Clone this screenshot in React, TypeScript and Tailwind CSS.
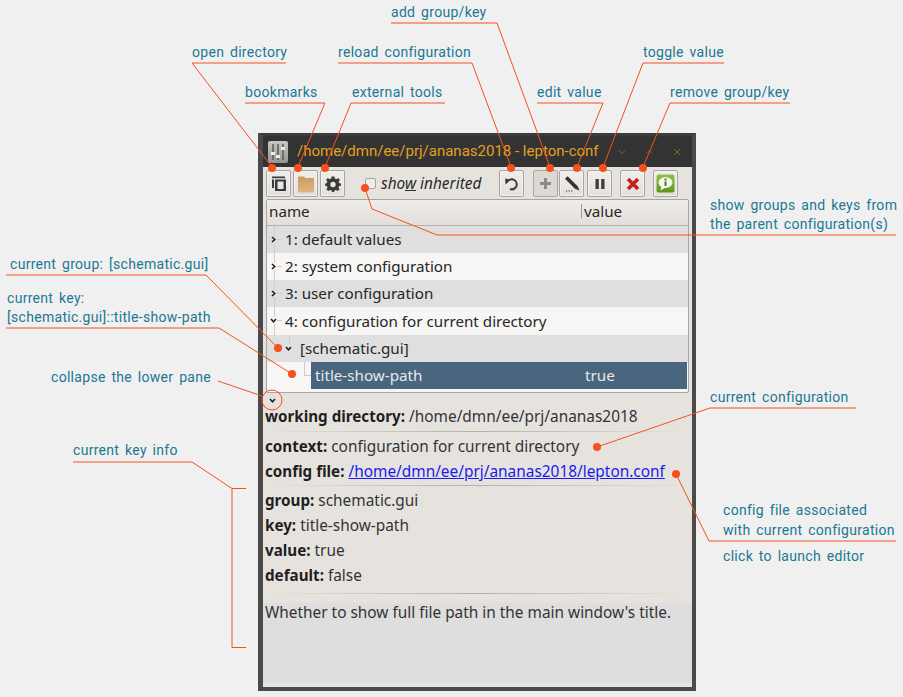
const noteClass = "absolute whitespace-nowrap text-[14px] leading-[20px] tracking-[0.3px] [word-spacing:2px] text-[#207893] [font-family:Roboto,sans-serif]";
const font = "[font-family:'Noto_Sans','Open_Sans',sans-serif]";

function Chevron({ down = false, className = "" }: { down?: boolean; className?: string }) {
  return (
    <svg width="7" height="7" viewBox="0 0 7 7" className={className}>
      <path d={down ? "M1 2 L3.5 4.8 L6 2" : "M2 1 L4.8 3.5 L2 6"} fill="none" stroke="#1c1c1c" strokeWidth="1.5" />
    </svg>
  );
}

function Btn({ children, className = "" }: { children: React.ReactNode; className?: string }) {
  return (
    <div className={`w-[25px] h-[27px] shrink-0 flex items-center justify-center rounded-[2px] border border-[#a9a6a1] shadow-[inset_0_0_0_1px_#f3f1ef] bg-gradient-to-b from-[#f0eeeb] to-[#e3e0dc] ${className}`}>
      {children}
    </div>
  );
}

function TreeRow({ label, even, down = false }: { label: string; even: boolean; down?: boolean }) {
  return (
    <div className={`relative h-[27.3px] flex items-center pl-[18px] ${even ? "bg-[#f7f6f4]" : "bg-[#dfdfdf]"}`}>
      <div className="absolute left-[7px] top-0 bottom-0 w-px bg-[#cfcdca]" />
      <div className="absolute left-[3px] top-[10px] bg-inherit">
        <Chevron down={down} />
      </div>
      <div className="absolute left-[10px] top-[13px] w-[5px] h-px bg-[#cfcdca]" />
      <span className="text-[15.2px] text-[#262626]">{label}</span>
    </div>
  );
}

function Info({ k, v, className = "" }: { k: string; v: React.ReactNode; className?: string }) {
  return (
    <div className={`h-[25px] leading-[25px] text-[15.4px] text-[#333] whitespace-nowrap ${className}`}>
      <b className="font-bold text-[15.2px] text-[#1f1f1f]">{k}</b> {v}
    </div>
  );
}

function Sep({ className = "" }: { className?: string }) {
  return <div className={`h-px bg-gradient-to-r from-[#e6e3df] via-[#b4b1ac] to-[#e6e3df] ${className}`} />;
}

const dots: [number, number][] = [
  [272, 168], [298, 168], [325, 168], [511, 168], [550, 168], [577, 168], [603, 168], [643, 168],
  [365, 188], [278, 348], [292, 374], [597, 447], [676, 474],
];

const paths = [
  "M192 63 H286 M192 63 L272 167",
  "M245 103 H325 L298 167",
  "M445 103 H351 L325 167",
  "M338 63 H472 L511 167",
  "M391 23 H497 L550 167",
  "M537 103 H603 L577 167",
  "M724 63 H643 L603 167",
  "M790 103 H670 L643 167",
  "M896 235 H437 L372 209 L365 188",
  "M6 275 H206 L278 348",
  "M6 328 H219 L292 374",
  "M218 381 L262 396",
  "M73 462 H192 L232 488.5 H246 M232 488.5 V647.5 H246",
  "M856 408 H710 L597 447",
  "M896 541 H709 L676 474",
];

export default function App() {
  return (
    <div className={`relative w-[903px] h-[697px] overflow-hidden bg-[#f0f0f0] ${font}`}>
      {/* window */}
      <div className="absolute left-[258px] top-[133px] w-[438px] h-[558px] flex flex-col bg-[#333333] border-[4px] border-l-[5px] border-t-[3px] border-[#4a4a4a] border-t-[#3c3c3c]">
        <div className="h-[31px] shrink-0 flex items-center pl-[5px] pr-[11px]">
          <svg width="20" height="22" viewBox="0 0 20 22" className="shrink-0">
            <defs>
              <linearGradient id="tb" x1="0" y1="0" x2="0" y2="1">
                <stop offset="0" stopColor="#c8c6c3" />
                <stop offset="1" stopColor="#989693" />
              </linearGradient>
            </defs>
            <rect x="0" y="0" width="20" height="22" rx="2" fill="url(#tb)" />
            <path d="M5 3 V19 M10 3 V19 M15 3 V19" stroke="#555" strokeWidth="1.4" />
            <rect x="3" y="11" width="4" height="3" fill="#ececec" />
            <rect x="8" y="14" width="4" height="3" fill="#ececec" />
            <rect x="13" y="6" width="4" height="3" fill="#ececec" />
          </svg>
          <span className="ml-[9px] text-[15px] text-[#e3a021] whitespace-nowrap [font-family:Roboto,sans-serif]">
            /home/dmn/ee/prj/ananas2018 - lepton-conf
          </span>
          <div className="ml-auto flex items-center gap-[19px]">
            <svg width="8" height="8" viewBox="0 0 8 8"><path d="M1 2.5 L4 5.5 L7 2.5" fill="none" stroke="#8d6c2b" /></svg>
            <svg width="8" height="8" viewBox="0 0 8 8"><path d="M1 5.5 L4 2.5 L7 5.5" fill="none" stroke="#75602e" /></svg>
            <svg width="8" height="8" viewBox="0 0 8 8" className="ml-[1px]"><path d="M1 1 L7 7 M7 1 L1 7" fill="none" stroke="#8d6c2b" /></svg>
          </div>
        </div>

        <div className="flex-1 flex flex-col min-h-0 bg-[#e6e3df]">
          {/* toolbar */}
          <div className="h-[30px] shrink-0 flex items-center pl-[3px] pt-[3px]">
            <Btn>
              <svg width="16" height="17" viewBox="0 0 16 17">
                <path d="M1 1.5 H14 V3.2 H1 Z" fill="#3a3a3a" />
                <path d="M4 4.5 H15 V16 H4 Z M6.5 6.5 V14 H12.5 V6.5 Z" fill="#3a3a3a" fillRule="evenodd" />
                <path d="M1 4.5 H3 V13 H1 Z" fill="#3a3a3a" />
              </svg>
            </Btn>
            <Btn className="ml-[2px]">
              <svg width="18" height="18" viewBox="0 0 18 18">
                <defs>
                  <linearGradient id="fd" x1="0" y1="0" x2="0" y2="1">
                    <stop offset="0" stopColor="#c79c60" />
                    <stop offset="1" stopColor="#e0b67e" />
                  </linearGradient>
                </defs>
                <path d="M1 2.5 Q1 1.5 2 1.5 H7 L8.5 3 H16 Q17 3 17 4 V16.5 Q17 17.5 16 17.5 H2 Q1 17.5 1 16.5 Z" fill="url(#fd)" />
              </svg>
            </Btn>
            <Btn className="ml-[2px]">
              <svg width="16" height="16" viewBox="0 0 16 16">
                <path fillRule="evenodd" fill="#3a3a3a" d="M6.6 0.5 H9.4 L9.8 2.6 L11.5 3.3 L13.2 2 L15 4 L13.6 5.6 L14.3 7.2 L16 7.6 V9.6 L14.2 10 L13.5 11.7 L14.6 13.3 L12.7 15 L11 13.9 L9.5 14.6 L9 16 H7 L6.5 14.6 L5 13.9 L3.3 15 L1.4 13.3 L2.5 11.7 L1.8 10 L0 9.6 V7.6 L1.7 7.2 L2.4 5.6 L1 4 L2.8 2 L4.5 3.3 L6.2 2.6 Z M8 5.8 A2.7 2.7 0 1 0 8 11.2 A2.7 2.7 0 1 0 8 5.8 Z" />
              </svg>
            </Btn>
            <div className="ml-[20px] w-[11px] h-[11px] rounded-[2px] border border-[#a5a29d] bg-[#eeedeb] shrink-0" />
            <span className="ml-[5px] w-[118px] text-[15.4px] italic text-[#2b2b2b] whitespace-nowrap">
              sho<span className="underline">w</span> inherited
            </span>
            <Btn>
              <svg width="15" height="15" viewBox="0 0 15 15">
                <path d="M5.5 3.9 A5 5 0 1 1 6 13" fill="none" stroke="#3a3a3a" strokeWidth="2" />
                <path d="M1.5 8.5 L1.2 2.6 L7 3.6 Z" fill="#3a3a3a" />
              </svg>
            </Btn>
            <Btn className="ml-[9px] border-[#96938f] shadow-none bg-none bg-[#dcd9d5]">
              <svg width="13" height="13" viewBox="0 0 13 13"><path d="M5 1 H8 V5 H12 V8 H8 V12 H5 V8 H1 V5 H5 Z" fill="#8d8b88" /></svg>
            </Btn>
            <Btn className="ml-[1px]">
              <svg width="18" height="18" viewBox="0 0 18 18">
                <path d="M2 3.8 L4.6 1.2 L14.6 11.2 L16.5 15.5 L12 13.8 Z" fill="#333" />
                <path d="M3 16 H4.2 M5.6 16 H6.8 M8.2 16 H9.4" stroke="#333" strokeWidth="1" />
              </svg>
            </Btn>
            <Btn className="ml-[3px]">
              <svg width="12" height="14" viewBox="0 0 12 14"><path d="M1.5 2 H4.8 V12 H1.5 Z M7.2 2 H10.5 V12 H7.2 Z" fill="#3c3c3c" /></svg>
            </Btn>
            <Btn className="ml-[8px]">
              <svg width="14" height="14" viewBox="0 0 14 14"><path d="M2 2 L12 12 M12 2 L2 12" stroke="#c5211c" strokeWidth="3.6" /></svg>
            </Btn>
            <Btn className="ml-[8px]">
              <svg width="19" height="19" viewBox="0 0 19 19">
                <defs>
                  <linearGradient id="gr" x1="0" y1="0" x2="0" y2="1">
                    <stop offset="0" stopColor="#8fc24a" />
                    <stop offset="1" stopColor="#5f9420" />
                  </linearGradient>
                </defs>
                <rect x="0.5" y="0.5" width="18" height="18" rx="2" fill="url(#gr)" />
                <ellipse cx="9.5" cy="8.5" rx="7" ry="5.4" fill="#f4f6ec" />
                <path d="M5.5 12.5 L4.5 16.5 L9.5 13.5 Z" fill="#f4f6ec" />
                <rect x="8.5" y="4.5" width="2" height="2" fill="#4d7a18" />
                <rect x="8.5" y="7.5" width="2" height="4.4" fill="#4d7a18" />
              </svg>
            </Btn>
          </div>

          {/* tree */}
          <div className="mx-[3px] mt-[2px] w-[423px] h-[194px] shrink-0 border border-[#a8a5a0] rounded-[2px] flex flex-col overflow-hidden bg-[#f7f6f4]">
            <div className="h-[25.5px] shrink-0 flex items-start pt-[4px] border-b border-[#b5b2ad] bg-gradient-to-b from-[#efedea] to-[#e2dfdb] text-[15.2px] text-[#262626]">
              <span className="pl-[2px] w-[315px] border-r border-[#9c9994] h-[14px] leading-[14px]">name</span>
              <span className="pl-[2px] leading-[14px]">value</span>
            </div>
            <TreeRow label="1: default values" even={false} />
            <TreeRow label="2: system configuration" even />
            <TreeRow label="3: user configuration" even={false} />
            <TreeRow label="4: configuration for current directory" even down />
            <div className="relative h-[27.3px] mt-[0.5px] flex items-center pl-[33px] bg-[#dfdfdf]">
              <div className="absolute left-[18px] top-[10px]"><Chevron down /></div>
              <div className="absolute left-[22px] top-0 h-[8px] w-px bg-[#cfcdca]" />
              <span className="text-[15.2px] text-[#262626]">[schematic.gui]</span>
            </div>
            <div className="relative flex-1 flex pl-[44px] pb-[3px] pr-[1px]">
              <div className="absolute left-[37px] top-0 h-[14px] w-[7px] border-l border-b border-[#cfcdca]" />
              <div className="flex-1 flex items-center bg-[#4a657e] text-[15.2px] text-[#e6e9ec]">
                <span className="pl-[4px] w-[274px]">title-show-path</span>
                <span>true</span>
              </div>
            </div>
          </div>

          {/* lower pane */}
          <div className="h-[11px] shrink-0 pl-[6px] pt-[4px]"><Chevron down /></div>
          <div className="px-[2px] flex-1 flex flex-col min-h-0">
            <Info k="working directory:" v="/home/dmn/ee/prj/ananas2018" />
            <Sep className="mt-[2px] mb-[2px]" />
            <Info k="context:" v="configuration for current directory" />
            <Info k="config file:" v={<a className="text-[#1a1af0] underline">/home/dmn/ee/prj/ananas2018/lepton.conf</a>} />
            <Sep className="mt-[1px] mb-[2px] h-[2px]" />
            <Info k="group:" v="schematic.gui" />
            <Info k="key:" v="title-show-path" />
            <Info k="value:" v="true" />
            <Info k="default:" v="false" />
            <Sep className="mt-[5px] mb-[9px]" />
            <div className="-mx-[2px] mb-[4px] flex-1 bg-[#dedede] px-[2px] text-[15.4px] leading-[20px] text-[#333] whitespace-nowrap">
              Whether to show full file path in the main window's title.
            </div>
          </div>
        </div>
      </div>

      {/* callout lines */}
      <svg width="903" height="697" className="absolute left-0 top-0 pointer-events-none">
        {paths.map((d) => <path key={d} d={d} fill="none" stroke="#f4511e" strokeWidth="1" />)}
        <circle cx="272" cy="400" r="10" fill="none" stroke="#f4511e" strokeWidth="1" />
        {dots.map(([x, y]) => <circle key={`${x}-${y}`} cx={x} cy={y} r="4" fill="#f4511e" />)}
      </svg>

      {/* notes */}
      <span className={`${noteClass} left-[192px] top-[42px]`}>open directory</span>
      <span className={`${noteClass} left-[245px] top-[82px]`}>bookmarks</span>
      <span className={`${noteClass} left-[352px] top-[82px]`}>external tools</span>
      <span className={`${noteClass} left-[338px] top-[42px]`}>reload configuration</span>
      <span className={`${noteClass} left-[391px] top-[2px]`}>add group/key</span>
      <span className={`${noteClass} left-[537px] top-[82px]`}>edit value</span>
      <span className={`${noteClass} left-[643px] top-[42px]`}>toggle value</span>
      <span className={`${noteClass} left-[670px] top-[82px]`}>remove group/key</span>
      <span className={`${noteClass} left-[710px] top-[195px]`}>show groups and keys from</span>
      <span className={`${noteClass} left-[710px] top-[214px]`}>the parent configuration(s)</span>
      <span className={`${noteClass} left-[10px] top-[254px]`}>current group: [schematic.gui]</span>
      <span className={`${noteClass} left-[7px] top-[288px]`}>current key:</span>
      <span className={`${noteClass} left-[7px] top-[307px]`}>[schematic.gui]::title-show-path</span>
      <span className={`${noteClass} left-[51px] top-[367px]`}>collapse the lower pane</span>
      <span className={`${noteClass} left-[73px] top-[440px]`}>current key info</span>
      <span className={`${noteClass} left-[710px] top-[387px]`}>current configuration</span>
      <span className={`${noteClass} left-[723px] top-[500px]`}>config file associated</span>
      <span className={`${noteClass} left-[723px] top-[520px]`}>with current configuration</span>
      <span className={`${noteClass} left-[723px] top-[546px]`}>click to launch editor</span>
    </div>
  );
}
